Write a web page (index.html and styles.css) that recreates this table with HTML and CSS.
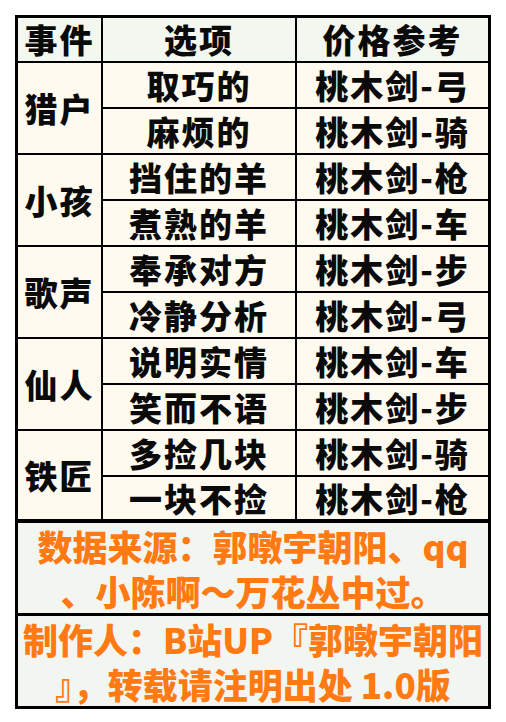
FILE: index.html
```html
<!DOCTYPE html>
<html lang="zh-CN">
<head>
<meta charset="utf-8">
<title>事件选项价格参考</title>
<link rel="stylesheet" href="styles.css">
</head>
<body>
<table class="guide">
  <colgroup>
    <col class="col-event">
    <col class="col-opt">
    <col class="col-price">
  </colgroup>
  <thead>
    <tr class="head-row"><th>事件</th><th>选项</th><th class="last">价格参考</th></tr>
  </thead>
  <tbody>
    <tr><td rowspan="2" class="event">猎户</td><td>取巧的</td><td class="last">桃木剑-弓</td></tr>
    <tr><td>麻烦的</td><td class="last">桃木剑-骑</td></tr>
    <tr><td rowspan="2" class="event">小孩</td><td>挡住的羊</td><td class="last">桃木剑-枪</td></tr>
    <tr><td>煮熟的羊</td><td class="last">桃木剑-车</td></tr>
    <tr><td rowspan="2" class="event">歌声</td><td>奉承对方</td><td class="last">桃木剑-步</td></tr>
    <tr><td>冷静分析</td><td class="last">桃木剑-弓</td></tr>
    <tr><td rowspan="2" class="event">仙人</td><td>说明实情</td><td class="last">桃木剑-车</td></tr>
    <tr><td>笑而不语</td><td class="last">桃木剑-步</td></tr>
    <tr><td rowspan="2" class="event">铁匠</td><td>多捡几块</td><td class="last">桃木剑-骑</td></tr>
    <tr class="end-row"><td>一块不捡</td><td class="last">桃木剑-枪</td></tr>
  </tbody>
  <tfoot>
    <tr class="note-row source"><td colspan="3" class="note"><span class="line">数据来源：郭暾宇朝阳、qq</span><span class="line">、小陈啊～万花丛中过。</span></td></tr>
    <tr class="note-row maker"><td colspan="3" class="note"><span class="line">制作人：B站UP『郭暾宇朝阳</span><span class="line">』，转载请注明出处 1.0版</span></td></tr>
  </tfoot>
</table>
</body>
</html>
```

FILE: styles.css
```css
html, body {
  margin: 0;
  padding: 0;
  background: #ffffff;
}

.guide {
  margin: 15px 0 0 15px;
  width: 476px;
  table-layout: fixed;
  border-collapse: separate;
  border-spacing: 0;
  border: 3px solid #000;
  font-family: "Noto Sans CJK SC", "Noto Sans", sans-serif;
  font-weight: 900;
  color: #0a0a0a;
}

.col-event { width: 85px; }
.col-opt { width: 194px; }
.col-price { width: 191px; }

.guide th,
.guide td {
  padding: 0;
  text-align: center;
  vertical-align: middle;
  border-right: 2px solid #000;
  border-bottom: 2px solid #000;
  font-size: 33px;
  line-height: 33px;
  letter-spacing: 2px;
  background: #fffaf0;
  white-space: nowrap;
}

.guide th {
  background: #f2f7ef;
  font-weight: 900;
}

.guide .last {
  border-right: none;
}

.head-row { height: 45px; }
.guide tbody tr { height: 46px; }
.guide tbody tr.end-row { height: 44px; }

.guide .note {
  border-right: none;
  background: #f3f6f0;
  color: #ff7a12;
  font-size: 35px;
  letter-spacing: 0;
}

.note .line {
  display: block;
  height: 45px;
  line-height: 45px;
}

.source .note {
  border-top: 2px solid #000;
  border-bottom: 3px solid #000;
  height: 89px;
}

.maker .note {
  border-bottom: none;
  height: 87px;
}
```
